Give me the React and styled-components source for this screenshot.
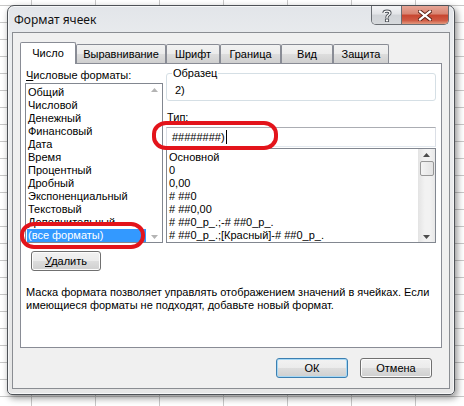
import React from "react";
import styled, { createGlobalStyle } from "styled-components";

const Global = createGlobalStyle`
  html, body { margin: 0; padding: 0; }
  body {
    width: 464px;
    height: 406px;
    overflow: hidden;
    background-color: #ffffff;
    background-image:
      linear-gradient(to right, #c8c8c8 1px, transparent 1px),
      linear-gradient(to bottom, #c8c8c8 1px, transparent 1px);
    background-size: 64px 17px;
    background-position: 31px 5px;
    font-family: "Liberation Sans", Arial, sans-serif;
    font-size: 11px;
    color: #000;
  }
  #root { display: block; }
`;

const Window = styled.div`
  margin: 5px 0 0 7px;
  width: 448px;
  box-sizing: border-box;
  border: 1px solid #4e5257;
  border-radius: 7px 7px 5px 5px;
  background: linear-gradient(to bottom, #e2e5e9 0%, #eceef0 12%, #e6e6e6 100%);
  box-shadow: 2px 3px 7px rgba(0, 0, 0, 0.45), inset 0 0 0 1px #f6f7f8;
  padding: 0 4px 5px 4px;
  display: flex;
  flex-direction: column;
`;

const TitleBar = styled.div`
  height: 26px;
  display: flex;
  align-items: flex-start;
  justify-content: space-between;
`;

const Title = styled.div`
  padding: 6px 0 0 2px;
  font-family: "Noto Sans", "Liberation Sans", sans-serif;
  font-size: 12px;
  line-height: 16px;
  color: #111;
`;

const CaptionButtons = styled.div`
  display: flex;
  margin-right: 1px;
  border: 1px solid #6a6e73;
  border-top: none;
  border-radius: 0 0 5px 5px;
  overflow: hidden;
  height: 18px;
`;

const CaptionButton = styled.div`
  width: ${(p) => p.$w}px;
  height: 18px;
  display: flex;
  align-items: center;
  justify-content: center;
  box-sizing: border-box;
  border-left: ${(p) => (p.$first ? "none" : "1px solid #6a6e73")};
  background: ${(p) =>
    p.$close
      ? "linear-gradient(to bottom, #e6a596 0%, #d88471 45%, #c7452f 50%, #cf5a44 80%, #e39a7f 100%)"
      : "linear-gradient(to bottom, #f3f4f6 0%, #e2e4e7 45%, #d0d3d7 50%, #d6d9dc 100%)"};
`;

const Client = styled.div`
  border: 1px solid #8a8d92;
  background: #f0f0f0;
  padding: 9px 0 10px 7px;
  display: flex;
  flex-direction: column;
`;

const TabRow = styled.div`
  display: flex;
  align-items: flex-end;
  position: relative;
  z-index: 1;
  margin-bottom: -1px;
`;

const Tab = styled.div`
  width: ${(p) => p.$w}px;
  height: ${(p) => (p.$active ? 22 : 19)}px;
  margin-bottom: ${(p) => (p.$active ? 0 : 1)}px;
  box-sizing: border-box;
  border: 1px solid #898c95;
  border-bottom: none;
  border-radius: 2px 2px 0 0;
  background: ${(p) =>
    p.$active ? "#ffffff" : "linear-gradient(to bottom, #f2f2f2 0%, #ebebeb 50%, #dddddd 51%, #cfcfcf 100%)"};
  display: flex;
  justify-content: center;
  align-items: center;
  padding-top: ${(p) => (p.$active ? 0 : 1)}px;
  line-height: 13px;
`;

const Panel = styled.div`
  position: relative;
  width: 422px;
  height: 285px;
  box-sizing: border-box;
  border: 1px solid #898c95;
  background: #ffffff;
  padding: 3px 5px 0 4px;
  display: flex;
  flex-direction: column;
`;

const Columns = styled.div`
  display: grid;
  grid-template-columns: 138px 270px;
  column-gap: 3px;
  align-items: start;
`;

const Column = styled.div`
  display: flex;
  flex-direction: column;
`;

const Label = styled.div`
  line-height: 13px;
  margin-top: ${(p) => p.$mt || 0}px;
  padding-left: 1px;
  white-space: nowrap;
`;

const Listbox = styled.div`
  margin-top: 1px;
  height: ${(p) => p.$h}px;
  box-sizing: border-box;
  border: 1px solid #828790;
  background: #fff;
  display: flex;
  overflow: hidden;
`;

const Items = styled.div`
  flex: 1;
  padding-top: 2px;
  overflow: hidden;
  min-width: 0;
`;

const Item = styled.div`
  height: 13px;
  line-height: 13px;
  padding-left: ${(p) => (p.$selected ? 1 : 2)}px;
  margin-left: ${(p) => (p.$selected ? 1 : 0)}px;
  white-space: nowrap;
  background: ${(p) => (p.$selected ? "#3399ff" : "transparent")};
  color: ${(p) => (p.$selected ? "#fff" : "#000")};
`;

const ScrollBar = styled.div`
  width: ${(p) => p.$w}px;
  display: flex;
  flex-direction: column;
  justify-content: space-between;
  align-items: center;
  padding: 4px 0 3px;
  box-sizing: border-box;
  background: ${(p) => (p.$enabled ? "linear-gradient(to right, #e3e3e3, #f2f2f2 40%, #f2f2f2 70%, #e8e8e8)" : "#ffffff")};
`;

const Thumb = styled.div`
  width: 14px;
  height: 15px;
  box-sizing: border-box;
  border: 1px solid #979797;
  border-radius: 2px;
  background: linear-gradient(to right, #f4f4f4, #e3e3e3);
  margin-bottom: auto;
  margin-top: 4px;
`;

const Sample = styled.fieldset`
  margin: 0;
  padding: 4px 8px 3px 8px;
  border: 1px solid #d5dfe5;
  border-radius: 3px;
  min-width: 0;
`;

const Legend = styled.legend`
  padding: 0 1px;
  margin-left: -3px;
  line-height: 13px;
`;

const SampleValue = styled.div`
  line-height: 13px;
`;

const TypeInput = styled.div`
  margin-top: 3px;
  height: 20px;
  box-sizing: border-box;
  border: 1px solid #abadb3;
  border-left-color: #dbdfe6;
  border-right-color: #dbdfe6;
  border-bottom-color: #e3e9ef;
  padding: 0 0 0 5px;
  display: flex;
  align-items: center;
  line-height: 13px;
`;

const Caret = styled.span`
  display: inline-block;
  width: 1px;
  height: 14px;
  background: #000;
  margin-left: 1px;
`;

const Button = styled.div`
  width: ${(p) => p.$w}px;
  height: 20px;
  box-sizing: border-box;
  border: 1px solid ${(p) => (p.$default ? "#3c7fb1" : "#707070")};
  border-radius: 3px;
  background: linear-gradient(to bottom, #f2f2f2 0%, #ebebeb 50%, #dddddd 51%, #cfcfcf 100%);
  box-shadow: ${(p) => (p.$default ? "inset 0 0 0 1px #a6d8f5" : "inset 0 0 0 1px #fcfcfc")};
  display: flex;
  align-items: center;
  justify-content: center;
  line-height: 13px;
`;

const DeleteButton = styled(Button)`
  margin: 8px 0 0 6px;
`;

const Description = styled.p`
  margin: 15px 0 0 1px;
  line-height: 13px;
  white-space: nowrap;
`;

const Footer = styled.div`
  display: flex;
  justify-content: flex-end;
  gap: 12px;
  margin-top: 10px;
  padding-right: 17px;
`;

const Mark = styled.div`
  position: absolute;
  left: ${(p) => p.$x}px;
  top: ${(p) => p.$y}px;
  width: ${(p) => p.$w}px;
  height: ${(p) => p.$h}px;
  box-sizing: border-box;
  border: 4px solid #e3141b;
  border-radius: 14px / 13px;
  pointer-events: none;
`;

const Arrow = ({ up, color }) => (
  <svg width="7" height="4" viewBox="0 0 7 4">
    <polygon points={up ? "0,4 7,4 3.5,0" : "0,0 7,0 3.5,4"} fill={color} />
  </svg>
);

const tabs = [
  { t: "Число", w: 56, active: true },
  { t: "Выравнивание", w: 90 },
  { t: "Шрифт", w: 54 },
  { t: "Граница", w: 61 },
  { t: "Вид", w: 52 },
  { t: "Защита", w: 56 },
];

const categories = [
  "Общий",
  "Числовой",
  "Денежный",
  "Финансовый",
  "Дата",
  "Время",
  "Процентный",
  "Дробный",
  "Экспоненциальный",
  "Текстовый",
  "Дополнительный",
  "(все форматы)",
];

const types = [
  "Основной",
  "0",
  "0,00",
  "# ##0",
  "# ##0,00",
  "# ##0_р_.;-# ##0_р_.",
  "# ##0_р_.;[Красный]-# ##0_р_.",
];

export default function App() {
  return (
    <>
      <Global />
      <Window>
        <TitleBar>
          <Title>Формат ячеек</Title>
          <CaptionButtons>
            <CaptionButton $w={29} $first>
              <svg width="10" height="13" viewBox="0 0 10 13">
                <path
                  d="M2 4 C2 1.5 8 1.5 8 4 C8 6 5 6 5 8 L5 9"
                  fill="none"
                  stroke="#4a4f55"
                  strokeWidth="3.2"
                />
                <path
                  d="M2 4 C2 1.5 8 1.5 8 4 C8 6 5 6 5 8 L5 9"
                  fill="none"
                  stroke="#ffffff"
                  strokeWidth="1.4"
                />
                <rect x="3.4" y="10" width="3.2" height="2.8" fill="#ffffff" stroke="#4a4f55" strokeWidth="0.9" />
              </svg>
            </CaptionButton>
            <CaptionButton $w={47} $close>
              <svg width="14" height="11" viewBox="0 0 14 11">
                <path d="M2 1.5 L12 9.5 M12 1.5 L2 9.5" stroke="#5a2318" strokeWidth="4" strokeLinecap="square" />
                <path d="M2 1.5 L12 9.5 M12 1.5 L2 9.5" stroke="#ffffff" strokeWidth="2.2" strokeLinecap="square" />
              </svg>
            </CaptionButton>
          </CaptionButtons>
        </TitleBar>
        <Client>
          <TabRow>
            {tabs.map((t) => (
              <Tab key={t.t} $w={t.w} $active={t.active}>
                {t.t}
              </Tab>
            ))}
          </TabRow>
          <Panel>
            <Columns>
              <Column>
                <Label $mt={2}>
                  <u>Ч</u>исловые форматы:
                </Label>
                <Listbox $h={160}>
                  <Items>
                    {categories.map((c, i) => (
                      <Item key={c} $selected={i === categories.length - 1}>
                        {c}
                      </Item>
                    ))}
                  </Items>
                  <ScrollBar $w={16}>
                    <Arrow up color="#b4b4b4" />
                    <Arrow color="#b4b4b4" />
                  </ScrollBar>
                </Listbox>
                <DeleteButton $w={70}>
                  <span>
                    <u>У</u>далить
                  </span>
                </DeleteButton>
              </Column>
              <Column>
                <Sample>
                  <Legend>Образец</Legend>
                  <SampleValue>2)</SampleValue>
                </Sample>
                <Label $mt={10}>
                  <u>Т</u>ип:
                </Label>
                <TypeInput>
                  ########)
                  <Caret />
                </TypeInput>
                <Listbox $h={95}>
                  <Items>
                    {types.map((c) => (
                      <Item key={c}>{c}</Item>
                    ))}
                  </Items>
                  <ScrollBar $w={17} $enabled>
                    <Arrow up color="#4d4d4d" />
                    <Thumb />
                    <Arrow color="#4d4d4d" />
                  </ScrollBar>
                </Listbox>
              </Column>
            </Columns>
            <Description>
              Маска формата позволяет управлять отображением значений в ячейках. Если
              <br />
              имеющиеся форматы не подходят, добавьте новый формат.
            </Description>
            <Mark $x={-1} $y={158} $w={125} $h={27} />
            <Mark $x={131} $y={57} $w={126} $h={29} />
          </Panel>
          <Footer>
            <Button $w={72} $default>
              ОК
            </Button>
            <Button $w={72}>Отмена</Button>
          </Footer>
        </Client>
      </Window>
    </>
  );
}
